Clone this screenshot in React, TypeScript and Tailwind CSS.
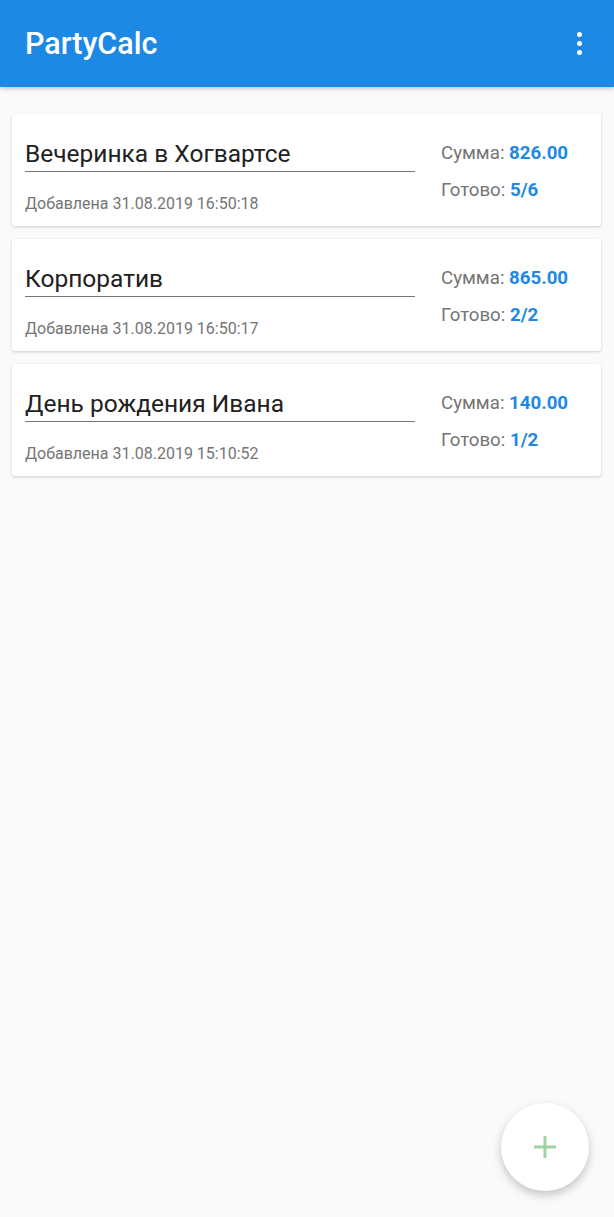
const parties = [
  { name: 'Вечеринка в Хогвартсе', added: '31.08.2019 16:50:18', sum: '826.00', done: '5/6' },
  { name: 'Корпоратив', added: '31.08.2019 16:50:17', sum: '865.00', done: '2/2' },
  { name: 'День рождения Ивана', added: '31.08.2019 15:10:52', sum: '140.00', done: '1/2' },
];

function PartyCard({ name, added, sum, done }: (typeof parties)[number]) {
  return (
    <div className="flex rounded-[3px] bg-white px-[13px] pb-[12px] pt-[26px] shadow-[0_1px_3px_rgba(0,0,0,0.18)]">
      <div className="w-[390px]">
        <div className="border-b border-[#757575] pb-[3px] text-[24.5px] leading-[28px] text-[#212121]">
          {name}
        </div>
        <div className="mt-[22px] text-[16px] leading-[20px] text-[#757575]">
          Добавлена {added}
        </div>
      </div>
      <div className="ml-[26px] mt-[1px] flex flex-col gap-[13px] text-[18.7px] leading-[24px] text-[#757575]">
        <div>
          Сумма: <span className="font-bold text-[#1e88e5]">{sum}</span>
        </div>
        <div>
          Готово: <span className="font-bold text-[#1e88e5]">{done}</span>
        </div>
      </div>
    </div>
  );
}

export default function App() {
  return (
    <div className="relative min-h-[1217px] bg-[#fafafa] font-['Roboto',sans-serif]">
      <header className="flex h-[87px] items-center justify-between bg-[#1e88e5] pl-[25px] pr-[32px] shadow-[0_2px_4px_rgba(0,0,0,0.2)]">
        <h1 className="text-[30.5px] font-medium text-white">PartyCalc</h1>
        <div className="flex flex-col gap-[4px]">
          <span className="h-[5px] w-[5px] rounded-full bg-white" />
          <span className="h-[5px] w-[5px] rounded-full bg-white" />
          <span className="h-[5px] w-[5px] rounded-full bg-white" />
        </div>
      </header>
      <main className="flex flex-col gap-[13px] px-[12px] pt-[27px] pr-[13px]">
        {parties.map((p) => (
          <PartyCard key={p.added} {...p} />
        ))}
      </main>
      <button className="absolute left-[501px] top-[1103px] flex h-[88px] w-[88px] items-center justify-center rounded-full bg-white shadow-[0_4px_10px_rgba(0,0,0,0.22)]">
        <svg width="24" height="24" viewBox="0 0 24 24">
          <path d="M12 1v22M1 12h22" stroke="#9fd3a2" strokeWidth="3" />
        </svg>
      </button>
    </div>
  );
}
